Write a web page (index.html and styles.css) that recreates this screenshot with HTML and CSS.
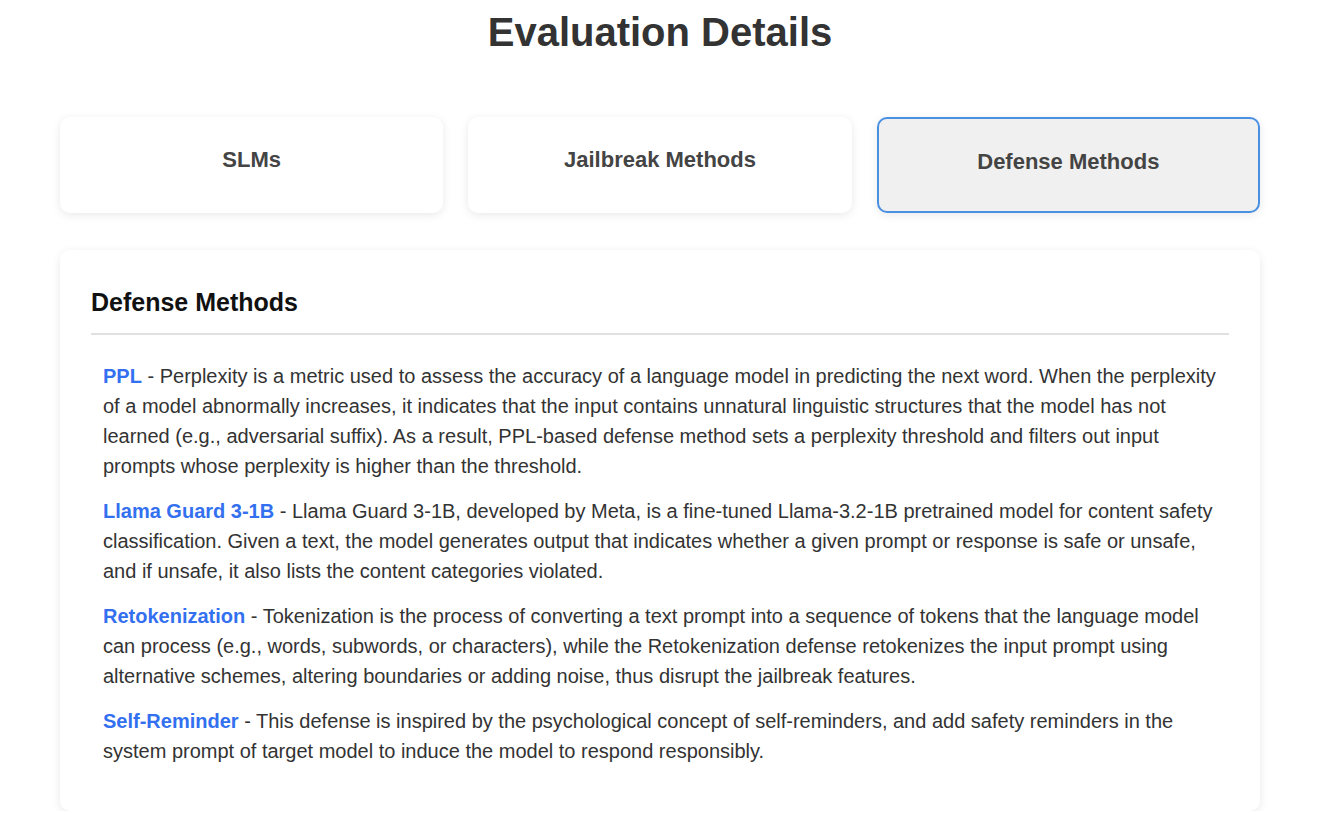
FILE: index.html
```html
<!DOCTYPE html>
<html lang="en">
<head>
<meta charset="utf-8">
<title>Evaluation Details</title>
<link rel="stylesheet" href="styles.css">
</head>
<body>
<div class="page">
  <h1 class="title">Evaluation Details</h1>
  <div class="tabs">
    <div class="tab"><h3 class="tab-label">SLMs</h3></div>
    <div class="tab"><h3 class="tab-label">Jailbreak Methods</h3></div>
    <div class="tab tab-active"><h3 class="tab-label">Defense Methods</h3></div>
  </div>
  <section class="card">
    <h2 class="card-title">Defense Methods</h2>
    <ul class="methods">
      <li class="method"><span class="method-name">PPL</span> - Perplexity is a metric used to assess the accuracy of a language model in predicting the next word. When the perplexity of a model abnormally increases, it indicates that the input contains unnatural linguistic structures that the model has not learned (e.g., adversarial suffix). As a result, PPL-based defense method sets a perplexity threshold and filters out input prompts whose perplexity is higher than the threshold.</li>
      <li class="method"><span class="method-name">Llama Guard 3-1B</span> - Llama Guard 3-1B, developed by Meta, is a fine-tuned Llama-3.2-1B pretrained model for content safety classification. Given a text, the model generates output that indicates whether a given prompt or response is safe or unsafe, and if unsafe, it also lists the content categories violated.</li>
      <li class="method"><span class="method-name">Retokenization</span> - Tokenization is the process of converting a text prompt into a sequence of tokens that the language model can process (e.g., words, subwords, or characters), while the Retokenization defense retokenizes the input prompt using alternative schemes, altering boundaries or adding noise, thus disrupt the jailbreak features.</li>
      <li class="method"><span class="method-name">Self-Reminder</span> - This defense is inspired by the psychological concept of self-reminders, and add safety reminders in the system prompt of target model to induce the model to respond responsibly.</li>
    </ul>
  </section>
</div>
</body>
</html>
```

FILE: styles.css
```css
* { box-sizing: border-box; }

html, body {
  margin: 0;
  padding: 0;
  background: #ffffff;
}

body {
  font-family: "Liberation Sans", Arial, sans-serif;
  color: #333333;
  padding-right: 10px;
}

.page {
  width: 1200px;
  margin: 0 auto;
  padding-top: 9px;
}

.title {
  margin: 0;
  text-align: center;
  font-size: 40px;
  line-height: 46px;
  font-weight: 700;
  color: #333333;
}

.tabs {
  display: grid;
  grid-template-columns: repeat(3, 1fr);
  gap: 25px;
  margin-top: 62px;
}

.tab {
  height: 96px;
  background: #ffffff;
  border: 2px solid transparent;
  border-radius: 10px;
  box-shadow: 0 2px 10px rgba(0, 0, 0, 0.09);
  display: flex;
  justify-content: center;
  align-items: flex-start;
  padding-top: 28px;
}

.tab-active {
  background: #f0f0f0;
  border-color: #4a90e2;
  padding-top: 30px;
}

.tab-label {
  margin: 0;
  font-size: 22px;
  line-height: 25px;
  font-weight: 700;
  color: #444444;
}

.card {
  margin-top: 37px;
  background: #ffffff;
  border-radius: 10px;
  box-shadow: 0 2px 10px rgba(0, 0, 0, 0.09);
  padding: 30px 31px 30px 31px;
}

.card-title {
  margin: 0;
  padding: 8px 0 16px;
  font-size: 25px;
  line-height: 29px;
  font-weight: 700;
  color: #111111;
  border-bottom: 2px solid #e0e0e0;
}

.methods {
  list-style: none;
  margin: 26px 0 0;
  padding: 0 12px;
}

.method {
  font-size: 20px;
  line-height: 30px;
  color: #333333;
  margin-bottom: 15px;
}

.method-name {
  font-weight: 700;
  color: #3370f0;
}
```
